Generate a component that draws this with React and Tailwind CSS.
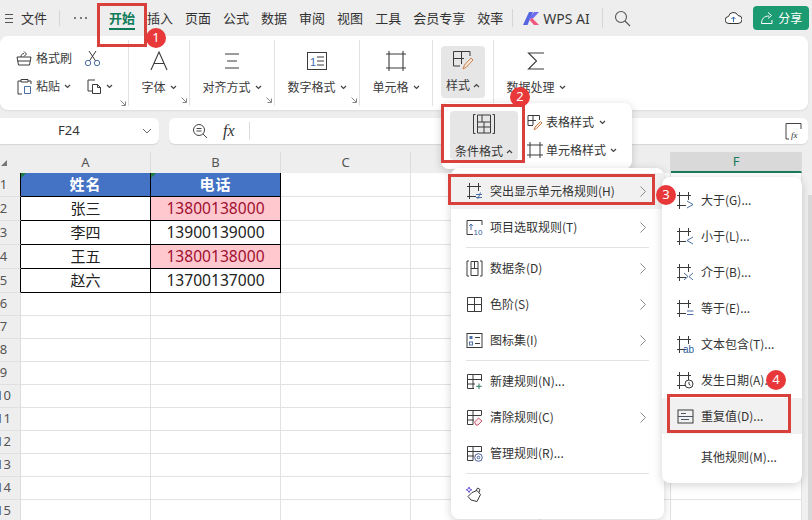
import React from 'react';

const Svg = ({ size = 16, box, className = '', children }) => (
  <svg width={size} height={size} viewBox={box || `0 0 ${size} ${size}`} fill="none" stroke="#3a3a3a" strokeWidth="1" className={`shrink-0 ${className}`}>
    {children}
  </svg>
);

const Down = ({ className = '' }) => (
  <svg width="7" height="5" viewBox="0 0 7 5" fill="none" stroke="#444" strokeWidth="1.2" className={`shrink-0 ${className}`}>
    <path d="M1 1l2.5 2.5L6 1" />
  </svg>
);

const Up = ({ className = '' }) => (
  <svg width="7" height="5" viewBox="0 0 7 5" fill="none" stroke="#444" strokeWidth="1.2" className={`shrink-0 ${className}`}>
    <path d="M1 4l2.5-2.5L6 4" />
  </svg>
);

const Launcher = () => (
  <svg width="6" height="6" viewBox="0 0 6 6" fill="none" stroke="#777" strokeWidth="0.9" className="shrink-0">
    <path d="M0.5 0.5L5 5M5.5 1.5V5.5H1.5" />
  </svg>
);

// cell frame with overhanging lines, shared by the highlight rules
const Frame = () => <path d="M0 3.500H14M0 13.500H9M2.500 0V17M11.500 0V8" />;

const icons = {
  painter: (
    <Svg size={16}>
      <path d="M1 7h14l-1.500 8h-11zM5 7c0-2 .5-3 3-3.500M8 1.500l2.500 2.500L8 6.500M1.500 11h13" />
    </Svg>
  ),
  scissors: (
    <Svg size={17}>
      <g stroke="#4a6fa5">
        <circle cx="4" cy="13" r="2.700" />
        <circle cx="13" cy="13" r="2.700" />
      </g>
      <path d="M5.500 10.800L12 1M11.500 10.800L5 1" />
    </Svg>
  ),
  paste: (
    <Svg size={17}>
      <path d="M5 3H2v13h4M12 3h3v3M5 1.500h7V4H5z" />
      <path d="M8.500 8.500h6v7h-6z" stroke="#4a6fa5" />
    </Svg>
  ),
  copy: (
    <Svg size={17}>
      <path d="M9 2H2v11h4" />
      <path d="M6.500 6.500h5l3 3v6h-8zM11.500 6.500v3h3" />
    </Svg>
  ),
  font: (
    <Svg size={20}>
      <path d="M2 19L10 1l8 18M5 12.500h10" strokeWidth="1.100" />
    </Svg>
  ),
  align: (
    <Svg size={20}>
      <path d="M3 3h14M5 10h10M3 17h14" strokeWidth="1.100" />
    </Svg>
  ),
  number: (
    <svg width="22" height="20" viewBox="0 0 22 20" fill="none" stroke="#3a3a3a" className="shrink-0">
      <rect x="1.500" y="1.500" width="19" height="17" />
      <text x="4" y="14.500" fontSize="11" fill="#3b6cb0" stroke="none" fontFamily="Liberation Sans">1</text>
      <path d="M11 6h7M11 10h7M11 14h7" />
    </svg>
  ),
  cell: (
    <Svg size={22}>
      <path d="M1 4H21M1 18H21M4 1V21M18 1V21" strokeWidth="1.100" />
    </Svg>
  ),
  style: (
    <Svg size={24} box="0 0 24 24">
      <path d="M2.500 2.500H19M2.500 2.500V17H9M2.500 9.500H13M10.500 2.500V15M19 2.500V7" />
      <path d="M12 20l1.500-4 6.500-7 2 2-6.500 7-3.500 2z" stroke="#c9824f" fill="#f8e7d8" />
    </Svg>
  ),
  sum: (
    <Svg size={20}>
      <path d="M18 2H2.500l8 8-8 8H18" strokeWidth="1.100" />
    </Svg>
  ),
  condition: (
    <Svg size={22}>
      <path d="M2.500 1.500H.5V20.500H2.500M19.500 1.500H21.500V20.500H19.500M4.500 2H17.500V20H4.500V2M4.500 9H17.500M9 2V9M4.500 14H17.500M11 9V20" />
    </Svg>
  ),
  table: (
    <Svg size={16}>
      <path d="M1 1.500H12.500V6M1 1.500V11.500H6M1 6.500H9M6 1.500V11" />
      <path d="M7 16l1-3 5.500-5.500 1.500 1.500-5.500 5.500z" stroke="#c9824f" fill="#f8e7d8" />
    </Svg>
  ),
  cellStyle: (
    <Svg size={16}>
      <path d="M0 3H16M0 13H16M3 0V16M13 0V16" />
    </Svg>
  ),
  neq: (
    <Svg>
      <Frame />
      <path d="M9 11.500h6M9 14.500h6M13.500 9.500l-3 7" stroke="#4a6fa5" />
    </Svg>
  ),
  top: (
    <Svg size={17}>
      <path d="M1 1.500H16V6M1 1.500V15.500H7" />
      <path d="M5 11V5M3.200 7L5 5l1.800 2" stroke="#4a6fa5" />
      <text x="7.500" y="15.500" fontSize="8" fill="#2f5f9e" stroke="none" fontFamily="Liberation Sans">10</text>
    </Svg>
  ),
  bars: (
    <Svg size={17}>
      <path d="M3 1H1V16H3M14 1H16V16H14M5 1.500H12V15.500H5ZM5 8.500H12M8.500 1.500V8.500" />
    </Svg>
  ),
  scale: (
    <Svg size={17}>
      <path d="M1.500 1.500H15.500V15.500H1.500ZM1.500 8.500H15.500M8.500 1.500V15.500" />
    </Svg>
  ),
  iconset: (
    <Svg size={17}>
      <rect x="1" y="1.500" width="15" height="14" />
      <rect x="3.500" y="4" width="3" height="3" fill="#4a6fa5" stroke="none" />
      <rect x="3.500" y="10" width="3" height="3" stroke="#4a6fa5" />
      <path d="M9 5.500h5M9 11.500h5" />
    </Svg>
  ),
  newRule: (
    <Svg size={17}>
      <path d="M1.500 1.500H15.500V8M1.500 1.500V15.500H8M1.500 6.500H15.500M1.500 11H9M7 1.500V15.500" />
      <path d="M13 10.500v5.500M10.200 13.300h5.600" stroke="#2f7a5f" />
    </Svg>
  ),
  clearRule: (
    <Svg size={17}>
      <path d="M1.500 1.500H15.500V6M1.500 1.500V15.500H7M1.500 6.500H15.500M1.500 11H8M7 1.500V15.500" />
      <path d="M8.500 13l4-4 3.500 3-4 4h-2z" stroke="#c9586e" fill="#fbe9ed" />
    </Svg>
  ),
  manageRule: (
    <Svg size={17}>
      <path d="M1.500 1.500H15.500V7M1.500 1.500V15.500H7M1.500 6.500H15.500M1.500 11H8M7 1.500V15.500" />
      <circle cx="12.500" cy="12.500" r="3.800" stroke="#4a5f9e" fill="#fff" />
      <circle cx="12.500" cy="12.500" r="1.300" stroke="#4a5f9e" />
    </Svg>
  ),
  brush: (
    <Svg size={17}>
      <path d="M6 6.500l5-2 3.500 4-3.500 7-6-1.500-3-3.500z" />
      <path d="M10 5l1.500-3 2.500 1.500-1 3" />
      <path d="M3 1l.8 2 2 .8-2 .8-.8 2-.8-2-2-.8 2-.8z" stroke="#6a55d8" />
    </Svg>
  ),
  gt: (
    <Svg size={17}>
      <Frame />
      <path d="M10 9l6 3.500-6 3.500" stroke="#4a6fa5" />
    </Svg>
  ),
  lt: (
    <Svg size={17}>
      <Frame />
      <path d="M16 9l-6 3.500 6 3.500" stroke="#4a6fa5" />
    </Svg>
  ),
  between: (
    <Svg size={17}>
      <Frame />
      <path d="M7 9l4 3.500L7 16M16 9l-4 3.500L16 16" stroke="#4a6fa5" />
    </Svg>
  ),
  eq: (
    <Svg size={17}>
      <Frame />
      <path d="M10 11h6.500M10 14.500h6.500" stroke="#4a6fa5" />
    </Svg>
  ),
  text: (
    <Svg size={17}>
      <Frame />
      <text x="6" y="16.500" fontSize="10" fill="#2f5f9e" stroke="none" fontFamily="Liberation Sans">ab</text>
    </Svg>
  ),
  date: (
    <Svg size={17}>
      <Frame />
      <circle cx="12" cy="12" r="4" stroke="#3a3a3a" fill="#fff" />
      <path d="M12 10v2.300l1.500 1" />
    </Svg>
  ),
  dup: (
    <Svg size={17}>
      <rect x="1" y="2" width="15" height="13" />
      <path d="M1 8.500H16M4 5.500H9M4 11.500H12" stroke="#4a5568" />
    </Svg>
  ),
};

const RibbonGroup = ({ className, icon, label, launcher = true, up = false }) => (
  <div className={`h-[66px] flex flex-col items-center border-r border-[#e2e2e2] ${className}`}>
    <div className="h-[30px] mt-[6px] flex items-center justify-center">{icon}</div>
    <div className="mt-[2px] h-[18px] flex items-center gap-[4px] text-xs text-[#3a3a3a]">
      <span>{label}</span>
      {up ? <Up /> : <Down />}
    </div>
    {launcher && <div className="self-end mt-[1px] mr-[2px]"><Launcher /></div>}
  </div>
);

const ToolBar = () => (
  <div className="h-9 flex items-center text-[13px] text-[#333]">
    <span className="ml-[5px] w-[8px] h-[9px] border-y border-[#555] flex items-center"><span className="w-full h-px bg-[#555]" /></span>
    <span className="ml-[8px]">文件</span>
    <span className="ml-[12px] h-[16px] w-px bg-[#d6d6d6]" />
    <span className="ml-[14px] w-[13px] flex justify-between">
      <i className="w-[2px] h-[2px] rounded-full bg-[#555]" />
      <i className="w-[2px] h-[2px] rounded-full bg-[#555]" />
      <i className="w-[2px] h-[2px] rounded-full bg-[#555]" />
    </span>
    <div className="ml-[22px] flex gap-3 items-center">
      <span className="relative font-bold text-[#0f7b5a]">
        开始
        <span className="absolute left-0 right-0 top-[20px] h-[2px] bg-[#0f7b5a]" />
      </span>
      {['插入', '页面', '公式', '数据', '审阅', '视图', '工具', '会员专享', '效率'].map((t) => (
        <span key={t}>{t}</span>
      ))}
    </div>
    <span className="ml-[9px] h-[18px] w-px bg-[#d6d6d6]" />
    <svg width="17" height="13" viewBox="0 0 17 13" className="ml-[10px] shrink-0">
      <path d="M0 13L6 0h4L4.500 13z" fill="#5566e0" />
      <path d="M5.500 7L11 0h5l-6 6.500z" fill="#6f6cf0" />
      <path d="M9 6l7 7h-5L6.500 8z" fill="#f0567f" />
    </svg>
    <span className="ml-[3px] w-[46px] text-[14px] text-[#3a3a3a] [font-family:'Noto_Sans',sans-serif]">WPS AI</span>
    <span className="ml-[13px] h-[20px] w-px bg-[#d6d6d6]" />
    <svg width="17" height="17" viewBox="0 0 17 17" fill="none" stroke="#555" strokeWidth="1.100" className="ml-[11px] shrink-0">
      <circle cx="7" cy="7" r="5.500" />
      <path d="M11 11l5 5" />
    </svg>
    <svg width="17" height="14" viewBox="0 0 17 14" fill="none" stroke="#333" className="ml-[94px] shrink-0">
      <path d="M5 12.500H4a3.500 3.500 0 0 1-.5-7A5 5 0 0 1 13 4.500a4 4 0 0 1 0 8z" fill="#fff" />
      <path d="M8.500 11V6M6.500 8l2-2 2 2" stroke="#2f6fb0" />
    </svg>
    <div className="ml-[11px] w-[56px] h-[24px] rounded-[4px] bg-[#1c9a72] flex items-center justify-center gap-[4px] text-white text-[12px]">
      <svg width="14" height="14" viewBox="0 0 14 14" fill="none" stroke="#fff" className="shrink-0">
        <path d="M12 9v3.500H1.500C1.500 8 4 5 9 5M8 1.500L11.500 4.500 8 7.500" />
      </svg>
      <span>分享</span>
    </div>
  </div>
);

const Ribbon = () => (
  <div className="w-[808px] h-[74px] bg-white rounded-[8px] shadow-[0_1px_2px_rgba(0,0,0,0.08)] flex pt-[4px]">
    <div className="w-[129px] h-[66px] border-r border-[#e2e2e2] flex flex-col text-xs text-[#3a3a3a]">
      <div className="flex items-center h-[28px] mt-[4px] pl-[16px]">
        {icons.painter}
        <span className="ml-[4px]">格式刷</span>
        <span className="ml-[12px]">{icons.scissors}</span>
      </div>
      <div className="flex items-center h-[28px] pl-[16px]">
        {icons.paste}
        <span className="ml-[3px]">粘贴</span>
        <Down className="ml-[4px]" />
        <span className="ml-[15px]">{icons.copy}</span>
        <Down className="ml-[3px]" />
      </div>
      <div className="self-end mr-[2px]"><Launcher /></div>
    </div>
    <RibbonGroup className="w-[61px]" icon={icons.font} label="字体" />
    <RibbonGroup className="w-[85px]" icon={icons.align} label="对齐方式" />
    <RibbonGroup className="w-[85px]" icon={icons.number} label="数字格式" />
    <RibbonGroup className="w-[73px]" icon={icons.cell} label="单元格" launcher={false} />
    <div className="w-[61px] h-[66px] border-r border-[#e2e2e2] pl-[8px] pt-[6px]">
      <div className="w-[44px] h-[52px] rounded-[4px] bg-[#e6e6e6] flex flex-col items-center">
        <div className="h-[30px] flex items-center">{icons.style}</div>
        <div className="mt-[1px] flex items-center gap-[3px] text-xs text-[#3a3a3a]"><span>样式</span><Up /></div>
      </div>
    </div>
    <RibbonGroup className="w-[84px] !border-r-0" icon={icons.sum} label="数据处理" launcher={false} />
  </div>
);

const FormulaBar = () => (
  <div className="mt-[8px] flex gap-[10px] h-[26px]">
    <div className="w-[159px] bg-white rounded-r-[6px] shadow-[0_1px_1px_rgba(0,0,0,0.1)] flex items-center text-[13px] text-[#333] [font-family:'Noto_Sans',sans-serif]">
      <span className="ml-[58px]">F24</span>
      <svg width="10" height="6" viewBox="0 0 10 6" fill="none" stroke="#666" className="ml-[62px]"><path d="M1 1l4 4 4-4" /></svg>
    </div>
    <div className="w-[639px] bg-white rounded-[6px] shadow-[0_1px_1px_rgba(0,0,0,0.1)] flex items-center">
      <svg width="16" height="16" viewBox="0 0 16 16" fill="none" stroke="#444" className="ml-[23px] shrink-0">
        <circle cx="7" cy="7" r="5.500" /><path d="M11 11l4 4M4.500 5.500h5M4.500 8h5" />
      </svg>
      <span className="ml-[15px] w-[18px] italic text-[16px] text-[#333] [font-family:'Liberation_Serif',serif]">fx</span>
      <span className="ml-[8px] h-[18px] w-px bg-[#dcdcdc]" />
      <svg width="18" height="18" viewBox="0 0 18 18" fill="none" stroke="#444" className="ml-[535px] shrink-0">
        <path d="M1 7V1.500h15V7M1 7v10h3" />
        <text x="6" y="16" fontSize="9" fontStyle="italic" fill="#333" stroke="none" fontFamily="Liberation Serif">fx</text>
      </svg>
    </div>
  </div>
);

const cols = ['A', 'B', 'C', 'D', 'E', 'F'];
const people = [
  ['张三', '13800138000', true],
  ['李四', '13900139000', false],
  ['王五', '13800138000', true],
  ['赵六', '13700137000', false],
];
const blankRows = [6, 7, 8, 9, 10, 11, 12, 13, 14, 15];

const RowHead = ({ n, dark }) => (
  <div className={`w-[21px] shrink-0 bg-[#eeeeee] border-b border-r border-b-[#e0e0e0] overflow-hidden flex text-[13px] text-[#555] items-center [font-family:'Noto_Sans',sans-serif] ${dark ? 'border-r-black' : 'border-r-[#dcdcdc]'}`}>
    <span className="w-[7px] flex justify-center">{n}</span>
  </div>
);

const Blank = ({ className = 'w-[130px]' }) => <div className={`shrink-0 border-r border-b border-[#e2e2e2] ${className}`} />;

// vertical scrollbar gutter at the right of each row
const Gutter = () => <div className="flex-1 bg-[#f0f0f0]" />;

const Sheet = () => (
  <div className="mt-[8px] bg-white flex-1 overflow-hidden">
    <div className="h-[21px] flex bg-[#eeeeee] text-[13px] text-[#555] [font-family:'Noto_Sans',sans-serif]">
      <div className="w-[21px] flex items-center pl-[1px]">
        <span className="w-0 h-0 border-l-[6px] border-l-transparent border-b-[6px] border-b-[#777]" />
      </div>
      {cols.map((c) => (
        <div
          key={c}
          className={`flex items-center justify-center shrink-0 border-r border-[#dcdcdc] ${c === 'F' ? 'w-[131px] bg-[#d9d9d9] text-[#1c7a5c] border-b-2 border-b-[#1c7a5c]' : 'w-[130px]'}`}
        >
          {c}
        </div>
      ))}
    </div>

    {/* header row of the table */}
    <div className="h-6 flex">
      <RowHead n={1} dark />
      <div className="relative w-[130px] shrink-0 bg-[#4472c4] border-r border-b border-black flex items-center justify-center text-white font-bold text-[15px] tracking-[1px]">
        <span className="absolute left-0 top-0 w-0 h-0 border-r-[5px] border-r-transparent border-t-[5px] border-t-[#1d7f3c]" />
        姓名
      </div>
      <div className="relative w-[130px] shrink-0 bg-[#4472c4] border-r border-b border-black flex items-center justify-center text-white font-bold text-[15px] tracking-[1px]">
        <span className="absolute left-0 top-0 w-0 h-0 border-r-[5px] border-r-transparent border-t-[5px] border-t-[#1d7f3c]" />
        电话
      </div>
      <Blank /><Blank /><Blank /><Blank className="w-[131px]" /><Gutter />
    </div>

    {people.map(([name, phone, dup], i) => (
      <div key={i} className="h-6 flex">
        <RowHead n={i + 2} dark />
        <div className="w-[130px] shrink-0 border-r border-b border-black flex items-center justify-center text-[15px] text-[#222]">{name}</div>
        <div className={`w-[130px] shrink-0 border-r border-b border-black flex items-center justify-center text-[15.6px] [font-family:'Noto_Sans',sans-serif] ${dup ? 'bg-[#ffc7ce] text-[#a01030]' : 'text-[#222]'}`}>
          {phone}
        </div>
        <Blank /><Blank /><Blank /><Blank className="w-[131px]" /><Gutter />
      </div>
    ))}

    {blankRows.map((n) => (
      <div key={n} className="h-[23px] flex">
        <RowHead n={n} />
        <Blank /><Blank /><Blank /><Blank /><Blank /><Blank className="w-[131px]" /><Gutter />
      </div>
    ))}
  </div>
);

const Arrow = () => (
  <svg width="6" height="11" viewBox="0 0 6 11" fill="none" stroke="#8a8a8a" className="shrink-0 ml-auto mr-[18px]">
    <path d="M0.500 0.500l5 5-5 5" />
  </svg>
);

const MenuItem = ({ icon, label, arrow, hot }) => (
  <div className={`h-9 flex items-center pl-[15px] text-xs text-[#333] ${hot ? 'bg-[#f1f1f1]' : ''}`}>
    <span className="w-[17px] flex justify-center">{icon}</span>
    <span className="ml-[7px]">{label}</span>
    {arrow && <Arrow />}
  </div>
);

const Line = () => <div className="mx-[15px] my-[2px] h-px bg-[#e2e2e2]" />;

const StyleMenu = () => (
  <div className="absolute left-[441px] top-[103px] w-[191px] h-[66px] bg-white rounded-[8px] shadow-[0_2px_8px_rgba(0,0,0,0.18)] flex text-xs text-[#333]">
    <div className="ml-[9px] mt-[8px] w-[68px] h-[49px] bg-[#e6e6e6] rounded-[4px] flex flex-col items-center">
      <div className="mt-[2px]">{icons.condition}</div>
      <div className="mt-[8px] flex items-center gap-[3px]"><span>条件格式</span><Up /></div>
    </div>
    <div className="ml-[9px] mt-[5px] flex flex-col">
      <div className="h-[28px] flex items-center">
        {icons.table}
        <span className="ml-[3px]">表格样式</span>
        <Down className="ml-[5px]" />
      </div>
      <div className="h-[28px] flex items-center">
        {icons.cellStyle}
        <span className="ml-[3px]">单元格样式</span>
        <Down className="ml-[4px]" />
      </div>
    </div>
  </div>
);

const RulesMenu = () => (
  <div className="absolute left-[451px] top-[168px] w-[213px] h-[351px] bg-white rounded-[8px] shadow-[0_2px_10px_rgba(0,0,0,0.18)] pt-[5px]">
    <MenuItem icon={icons.neq} label="突出显示单元格规则(H)" arrow hot />
    <MenuItem icon={icons.top} label="项目选取规则(T)" arrow />
    <Line />
    <MenuItem icon={icons.bars} label="数据条(D)" arrow />
    <MenuItem icon={icons.scale} label="色阶(S)" arrow />
    <MenuItem icon={icons.iconset} label="图标集(I)" arrow />
    <Line />
    <MenuItem icon={icons.newRule} label="新建规则(N)..." />
    <MenuItem icon={icons.clearRule} label="清除规则(C)" arrow />
    <MenuItem icon={icons.manageRule} label="管理规则(R)..." />
    <Line />
    <MenuItem icon={icons.brush} label="" />
  </div>
);

const CompareMenu = () => (
  <div className="absolute left-[662px] top-[177px] w-[140px] h-[306px] bg-white rounded-[8px] shadow-[0_2px_10px_rgba(0,0,0,0.18)] pt-[5px]">
    <MenuItem icon={icons.gt} label="大于(G)..." />
    <MenuItem icon={icons.lt} label="小于(L)..." />
    <MenuItem icon={icons.between} label="介于(B)..." />
    <MenuItem icon={icons.eq} label="等于(E)..." />
    <MenuItem icon={icons.text} label="文本包含(T)..." />
    <MenuItem icon={icons.date} label="发生日期(A)..." />
    <MenuItem icon={icons.dup} label="重复值(D)..." hot />
    <div className="h-9 mt-[5px] flex items-center pl-[39px] text-xs text-[#333]">其他规则(M)...</div>
  </div>
);

const Mark = ({ className }) => <div className={`absolute border-[3px] border-[#d8403c] ${className}`} />;

const Badge = ({ n, className }) => (
  <div className={`absolute w-5 h-5 rounded-full bg-[#e8383a] text-white text-[13px] flex items-center justify-center [font-family:'Noto_Sans',sans-serif] ${className}`}>
    {n}
  </div>
);

export default function App() {
  return (
    <div className="relative w-[812px] h-[520px] overflow-hidden whitespace-nowrap bg-[#eeeeee] flex flex-col [font-family:'Noto_Sans_CJK_SC','Noto_Sans',sans-serif]">
      <ToolBar />
      <Ribbon />
      <FormulaBar />
      <Sheet />
      <StyleMenu />
      <RulesMenu />
      <CompareMenu />
      {/* scrollbar thumb */}
      <div className="absolute left-[808px] top-[195px] w-[4px] h-[325px] bg-[#d8d8d8]" />
      {/* tutorial annotations drawn on top of the screenshot */}
      <Mark className="left-[97px] top-[3px] w-[50px] h-[44px]" />
      <Mark className="left-[441px] top-[104px] w-[84px] h-[59px]" />
      <Mark className="left-[448px] top-[174px] w-[207px] h-[31px]" />
      <Mark className="left-[667px] top-[394px] w-[124px] h-[39px]" />
      <Badge n={1} className="left-[146px] top-[28px]" />
      <Badge n={2} className="left-[510px] top-[87px]" />
      <Badge n={3} className="left-[656px] top-[185px]" />
      <Badge n={4} className="left-[766px] top-[370px]" />
    </div>
  );
}
